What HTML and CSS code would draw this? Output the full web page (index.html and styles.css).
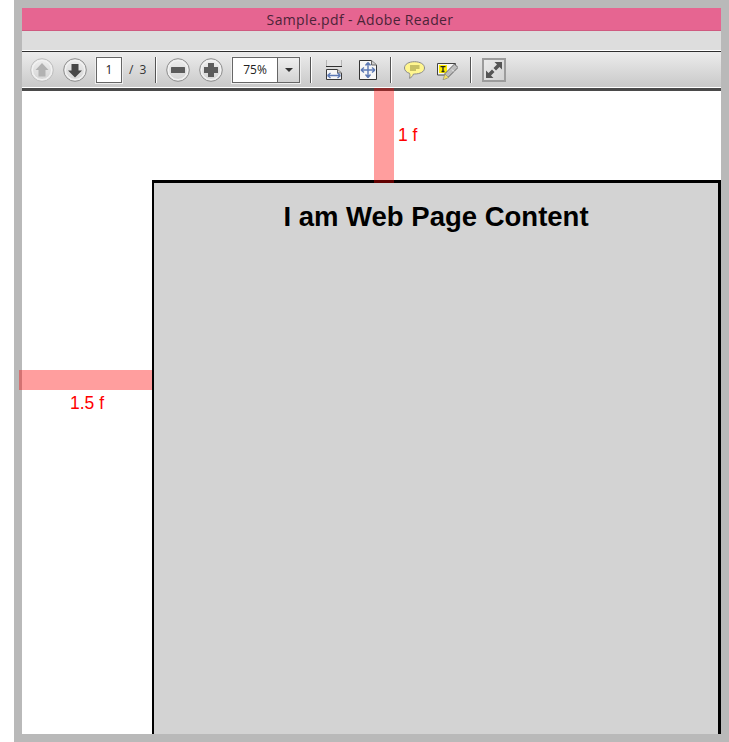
FILE: index.html
```html
<!DOCTYPE html>
<html lang="en">
<head>
<meta charset="utf-8">
<title>Sample.pdf - Adobe Reader</title>
<link rel="stylesheet" href="styles.css">
</head>
<body>
<div class="window">
  <header class="titlebar">Sample.pdf - Adobe Reader</header>
  <div class="menubar"></div>
  <div class="toolbar">
    <div class="group nav">
      <svg class="round" viewBox="0 0 24 24"><defs><linearGradient id="b" x1="0" y1="0" x2="0" y2="1"><stop offset="0" stop-color="#ececec"/><stop offset="1" stop-color="#d6d6d6"/></linearGradient></defs><circle cx="12" cy="12" r="11.300" fill="#ededed" stroke="#bcbcbc"/><circle cx="12" cy="12" r="9.500" fill="url(#b)" stroke="#f4f4f4"/><path d="M12 5 18.500 12H15.500V18.500H8.500V12H5.500Z" fill="#b2b2b2"/></svg>
      <svg class="round" viewBox="0 0 24 24"><circle cx="12" cy="12" r="11.300" fill="#ededed" stroke="#8c8c8c"/><circle cx="12" cy="12" r="9.500" fill="url(#b)" stroke="#f4f4f4"/><path d="M12 19.500 5 12.500H8.500V6H15.500V12.500H19Z" fill="#474747"/></svg>
      <div class="field page-field">1</div>
    </div>
    <span class="count">/ 3</span>
    <span class="sep sep-a"></span>
    <div class="group zoomers">
      <svg class="round" viewBox="0 0 24 24"><circle cx="12" cy="12" r="11.300" fill="#ededed" stroke="#8c8c8c"/><circle cx="12" cy="12" r="9.500" fill="url(#b)" stroke="#f4f4f4"/><rect x="5" y="9" width="14" height="6" rx=".5" fill="#5c5c5c"/></svg>
      <svg class="round" viewBox="0 0 24 24"><circle cx="12" cy="12" r="11.300" fill="#ededed" stroke="#8c8c8c"/><circle cx="12" cy="12" r="9.500" fill="url(#b)" stroke="#f4f4f4"/><path d="M9 5H15V9H19V15H15V19H9V15H5V9H9Z" fill="#5c5c5c"/></svg>
      <div class="zoombox"><span class="zoomval">75%</span><span class="zoomarrow"><i class="caret"></i></span></div>
    </div>
    <span class="sep sep-b"></span>
    <div class="group fits">
      <svg class="icon-18" viewBox="0 0 18 20"><path d="M1.500 0V7H16.500V0Z" fill="#e4e4e4"/><path d="M1.500 0V6.500H16.500V0" fill="none" stroke="#b5b5b5"/><path d="M1 6.500H17" stroke="#333"/><path d="M1.500 9.500H12.500L16.500 13V19.500H1.500Z" fill="#f6f6f6" stroke="#3a3a3a"/><path d="M12.500 9.500V13H16.500" fill="#ccc" stroke="#666"/><path d="M2.500 15.500H15.500M2.500 15.500 5.500 13M2.500 15.500 5.500 18M15.500 15.500 12.500 13M15.500 15.500 12.500 18" fill="none" stroke="#5b78b4" stroke-width="1.300"/></svg>
      <svg class="icon-18" viewBox="0 0 18 20"><path d="M.5.5H12.500L17.500 5V19.500H.5Z" fill="#f6f6f6" stroke="#333"/><path d="M12.500.5V5H17.500" fill="#ccc" stroke="#666"/><path d="M9 2.500V17.500M9 2.500 6.500 5.500M9 2.500 11.500 5.500M9 17.500 6.500 14.500M9 17.500 11.500 14.500M2 10H16M2 10 5 7.500M2 10 5 12.500M16 10 13 7.500M16 10 13 12.500" fill="none" stroke="#5b78b4" stroke-width="1.400"/></svg>
    </div>
    <span class="sep sep-c"></span>
    <div class="group notes">
      <svg class="comment" viewBox="0 0 21 18"><path d="M10.500.7C16 .7 20.500 3 20.500 7 20.500 10.800 16 13 10.500 13H9.500C8.700 15 7.500 16.500 5.500 17.300 6 15.500 6 14 5.500 12.300 2.500 11.500.5 9.500.5 7 .5 3 5 .7 10.500.7Z" fill="#fff68f" stroke="#8a8a8a"/><path d="M6 5H15.500M6 7H15.500M6 9H12" stroke="#8f8a3a" fill="none"/></svg>
      <svg class="sign" viewBox="0 0 21 20"><path d="M.5 3.500H18.500V8L13 15H.5Z" fill="#f6f6f6" stroke="#444"/><rect x="2" y="5" width="8" height="8" fill="#ffee00"/><path d="M3.500 6.700H8.500M6 6.700V11.500M4.500 11.500H7.500" fill="none" stroke="#222" stroke-width="1.300"/><path d="M17.500 4 21 7.500 11.500 17 7.500 18.500 8 13.500Z" fill="#bdbdbd" stroke="#666"/><path d="M15 9.500 17 11.500" stroke="#f2f2f2"/><path d="M6 20 7.800 14 11.800 17.500Z" fill="#efe06a" stroke="#777" stroke-width=".5"/></svg>
    </div>
    <span class="sep sep-d"></span>
    <svg class="expand" viewBox="0 0 24 24"><defs><linearGradient id="e" x1="0" y1="0" x2="1" y2="1"><stop offset="0" stop-color="#ececec"/><stop offset="1" stop-color="#d2d2d2"/></linearGradient></defs><rect x="1" y="1" width="22" height="22" fill="url(#e)" stroke="#9c9c9c" stroke-width="2"/><path d="M12.500 4H20V11.500L17.500 9 14 12.500 11.500 10 15 6.500ZM4 12.500V20H11.500L9 17.500 12.500 14 10 11.500 6.500 15Z" fill="#555"/></svg>
  </div>
  <main class="doc">
    <section class="page">
      <h1 class="heading">I am Web Page Content</h1>
    </section>
    <div class="bar bar-top"></div>
    <div class="bar bar-left"></div>
    <span class="note note-top">1 f</span>
    <span class="note note-left">1.5 f</span>
  </main>
</div>
</body>
</html>
```

FILE: styles.css
```css
html, body {
  margin: 0;
  height: 100%;
  background: #fff;
}

body {
  padding-left: 14px;
  box-sizing: border-box;
  overflow: hidden;
  font-family: "Liberation Sans", Arial, sans-serif;
}

.window {
  box-sizing: border-box;
  height: 742px;
  width: 715px;
  border: 8px solid #b9b9b9;
  display: flex;
  flex-direction: column;
  background: #fff;
  position: relative;
}

.titlebar {
  box-sizing: border-box;
  height: 23px;
  padding-right: 23px;
  background: #e66591;
  border-bottom: 1px solid #cf5a80;
  color: #4b2338;
  font-family: "Open Sans", sans-serif;
  font-size: 14px;
  line-height: 23px;
  text-align: center;
  letter-spacing: .35px;
}

.menubar {
  height: 19px;
  background: #dddddd;
}

.toolbar {
  box-sizing: border-box;
  height: 41px;
  padding: 2px 0 0 8px;
  display: flex;
  align-items: flex-start;
  background:
    linear-gradient(#ffffff 0 1px, #2e2e2e 1px 2px, transparent 2px),
    linear-gradient(#eeeeee, #c8c8c8);
  border-bottom: 3px solid #4a4a4a;
  box-shadow: inset 0 -1px 0 #fff;
}

.group {
  display: flex;
  align-items: center;
  margin-top: 5px;
  height: 26px;
}

.nav, .zoomers {
  gap: 9px;
}

.round {
  width: 24px;
  height: 24px;
}

.field, .zoombox {
  box-sizing: border-box;
  height: 26px;
  background: #fff;
  border: 1px solid #666;
  box-shadow: 0 0 0 1px #eee;
  font-family: "Open Sans", sans-serif;
  font-size: 12px;
  color: #222;
}

.page-field {
  width: 26px;
  line-height: 24px;
  text-align: center;
}

.count {
  margin: 5px 0 0 7px;
  width: 17px;
  font-family: "Open Sans", sans-serif;
  font-size: 12px;
  line-height: 26px;
  color: #333;
  word-spacing: 3px;
  white-space: nowrap;
}

.sep {
  width: 2px;
  height: 26px;
  margin-top: 5px;
  background: linear-gradient(90deg, #555 0 1px, #fff 1px);
}

.sep-a { margin-left: 9px; }
.zoomers { margin-left: 9px; }
.sep-b { margin-left: 10px; }
.fits { margin-left: 13px; gap: 16px; }
.sep-c { margin-left: 13px; }
.notes { margin-left: 12px; gap: 12px; }
.sep-d { margin-left: 12px; }

.zoombox {
  width: 68px;
  display: flex;
}

.zoomval {
  width: 44px;
  text-align: center;
  line-height: 24px;
  border-right: 1px solid #666;
}

.zoomarrow {
  flex: 1;
  display: flex;
  align-items: center;
  justify-content: center;
  background: linear-gradient(#efefef, #d2d2d2);
}

.caret {
  border-top: 4px solid #333;
  border-left: 4px solid transparent;
  border-right: 4px solid transparent;
}

.icon-18 { width: 18px; height: 20px; }
.comment { width: 21px; height: 18px; }
.sign { width: 21px; height: 20px; }

.expand {
  width: 24px;
  height: 24px;
  margin: 6px 0 0 10px;
}

.doc {
  flex: 1;
  min-height: 0;
  padding: 89px 0 0 130px;
  display: flex;
  background: #fff;
}

.page {
  flex: 1;
  box-sizing: border-box;
  background: #d3d3d3;
  border: solid #000;
  border-width: 3px 3px 0 2px;
  text-align: center;
}

.heading {
  margin: 18px 0 0;
  font-size: 27.5px;
  line-height: 31px;
  font-weight: bold;
  color: #000;
}

.bar {
  position: absolute;
  background: rgba(255, 0, 0, .38);
}

.bar-top {
  left: 352px;
  top: 80px;
  width: 20px;
  height: 95px;
}

.bar-left {
  left: -3px;
  top: 362px;
  width: 133px;
  height: 20px;
}

.note {
  position: absolute;
  color: #f00;
  font-size: 17.5px;
  line-height: 20px;
}

.note-top { left: 376px; top: 117px; }
.note-left { left: 48px; top: 385px; }
```
